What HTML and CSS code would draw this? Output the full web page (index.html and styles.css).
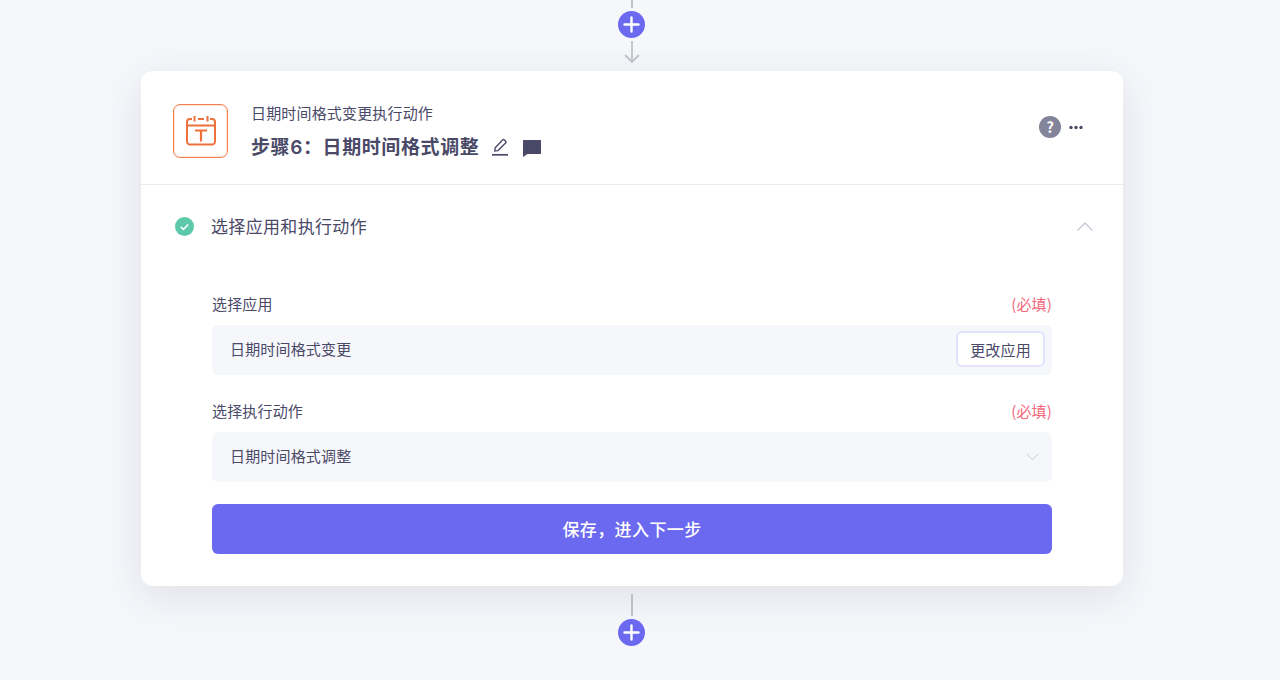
FILE: index.html
```html
<!DOCTYPE html>
<html lang="zh-CN">
<head>
    <meta charset="UTF-8">
    <meta name="viewport" content="width=device-width, initial-scale=1.0">
    <title>日期时间格式调整</title>
    <link rel="stylesheet" href="styles.css">
</head>
<body>
    <div class="connector connector-top">
        <div class="line line-top"></div>
        <button class="add-btn" aria-label="添加步骤">
            <svg width="27" height="27" viewBox="0 0 27 27"><path d="M13.500 6.500v14M6.500 13.500h14" stroke="#fff" stroke-width="2.400" stroke-linecap="round" fill="none"/></svg>
        </button>
        <svg class="arrow" width="16" height="23" viewBox="0 0 16 23"><path d="M8 0v21M1 14l7 7 7-7" stroke="#c0c1c6" stroke-width="1.800" fill="none"/></svg>
    </div>

    <div class="card">
        <div class="card-head">
            <div class="app-icon">
                <svg width="32" height="32" viewBox="0 0 32 32" fill="none" stroke="#f0703c" stroke-width="2">
                    <path d="M7 4H5A3 3 0 0 0 2 7v19.500a3 3 0 0 0 3 3h22a3 3 0 0 0 3-3V7a3 3 0 0 0-3-3h-2"/>
                    <path d="M13 4h6M9.500 1v5.500M22.500 1v5.500M2 10.500h28"/>
                    <path d="M10 15.500h12M16 15.500v11" stroke-width="2.200"/>
                </svg>
            </div>
            <div class="head-text">
                <div class="head-sub">日期时间格式变更执行动作</div>
                <div class="head-title">
                    <span>步骤6&#xFF1A;日期时间格式调整</span>
                    <svg class="edit-icon" width="17" height="18" viewBox="0 0 17 18" fill="none" stroke="#4a4a68" stroke-width="1.400"><path d="M2.800 13 3.200 9.800 10.800 1.800a1 1 0 0 1 1.400 0l1.600 1.600a1 1 0 0 1 0 1.400L6 12.600z"/><path d="M0 16.800h16" stroke-width="1.700"/></svg>
                    <svg class="note-icon" width="18" height="17" viewBox="0 0 18 17"><path d="M.6 0h16.800a.6.6 0 0 1 .6.600v12.800a.6.6 0 0 1-.6.600H4.500L0 17V.6A.6.6 0 0 1 .6 0z" fill="#4a4a68"/></svg>
                </div>
            </div>
            <div class="head-actions">
                <span class="help-icon">?</span>
                <svg width="14" height="5" viewBox="0 0 14 5" fill="#4a4a68"><circle cx="2" cy="2.500" r="1.700"/><circle cx="7" cy="2.500" r="1.700"/><circle cx="12" cy="2.500" r="1.700"/></svg>
            </div>
        </div>

        <div class="section-head">
            <svg width="19" height="19" viewBox="0 0 19 19"><circle cx="9.500" cy="9.500" r="9.500" fill="#5cc9aa"/><path d="m5.800 9.800 2.600 2.500 4.800-4.800" stroke="#fff" stroke-width="1.600" fill="none"/></svg>
            <span class="section-title">选择应用和执行动作</span>
            <svg class="chevron-up" width="16" height="9" viewBox="0 0 16 9"><path d="M.4 8.600 8 1l7.600 7.600" stroke="#b9c0cd" stroke-width="1.100" fill="none"/></svg>
        </div>

        <div class="form">
            <div class="field">
                <div class="field-label"><span>选择应用</span><span class="required">(必填)</span></div>
                <div class="field-box">
                    <span class="field-value">日期时间格式变更</span>
                    <button class="change-btn">更改应用</button>
                </div>
            </div>
            <div class="field">
                <div class="field-label"><span>选择执行动作</span><span class="required">(必填)</span></div>
                <div class="field-box">
                    <span class="field-value">日期时间格式调整</span>
                    <svg class="chevron-down" width="13" height="8" viewBox="0 0 13 8"><path d="m.5.700 6 6 6-6" stroke="#c3c6d1" stroke-width="1" fill="none"/></svg>
                </div>
            </div>
            <button class="save-btn">保存&#xFF0C;进入下一步</button>
        </div>
    </div>

    <div class="connector connector-bottom">
        <div class="line line-bottom"></div>
        <button class="add-btn" aria-label="添加步骤">
            <svg width="27" height="27" viewBox="0 0 27 27"><path d="M13.500 6.500v14M6.500 13.500h14" stroke="#fff" stroke-width="2.400" stroke-linecap="round" fill="none"/></svg>
        </button>
    </div>
</body>
</html>
```

FILE: styles.css
```css
html, body { height: 100%; }
body { margin: 0; height: 680px; overflow: hidden; background: #f6f7fb; color: #4a4a68; font-family: "Noto Sans CJK SC", "Noto Sans", sans-serif; }
button { font-family: inherit; cursor: pointer; }

.connector { width: 982px; margin-left: 141px; display: flex; flex-direction: column; align-items: center; }
.connector-top { height: 71px; }
.connector-bottom { margin-top: 8px; }
.line { width: 2px; background: #c0c1c6; }
.line-top { height: 8px; margin-bottom: 3px; }
.line-bottom { height: 22px; margin-bottom: 3px; }
.add-btn { width: 27px; height: 27px; padding: 0; margin-right: 1px; border: 0; border-radius: 50%; background: #6b69f0; display: block; }
.add-btn svg { display: block; }
.arrow { margin-top: 3px; }

.card { width: 982px; height: 515px; margin-left: 141px; background: #fff; border-radius: 12px; box-shadow: 0 10px 40px rgba(60, 64, 90, 0.12); }
.card-head { height: 113px; padding: 0 40px 0 32px; display: flex; align-items: center; border-bottom: 1px solid #e9eaee; }
.app-icon { width: 53px; height: 52px; margin-top: 6px; margin-right: 23px; border: 1px solid #f4814f; border-radius: 7px; box-shadow: inset 0 0 0 1px rgba(245, 121, 63, 0.2); display: flex; align-items: center; justify-content: center; }
.head-text { flex: 1; margin-top: 8px; }
.head-sub { font-size: 15px; line-height: 22px; letter-spacing: 0.17px; }
.head-title { margin-top: 11px; font-family: Inter, "Noto Sans CJK SC", sans-serif; font-size: 19px; line-height: 26px; font-weight: 600; letter-spacing: 0.6px; display: flex; align-items: center; }
.edit-icon { margin-left: 13px; margin-top: -2px; }
.note-icon { margin-left: 14px; }
.head-actions { display: flex; align-items: center; gap: 8px; margin-top: -1px; }
.help-icon { width: 22px; height: 22px; border-radius: 50%; background: #83839a; color: #fff; font-size: 15px; line-height: 22px; font-weight: 700; text-align: center; }

.section-head { height: 82px; padding: 0 30px 2px 34px; display: flex; align-items: center; }
.section-title { flex: 1; margin-left: 17px; margin-bottom: 2px; font-size: 17px; letter-spacing: 0.33px; }
.chevron-up { display: block; }

.form { margin: 0 71px; }
.field { margin-top: 27px; }
.field:first-child { margin-top: 26px; }
.field-label { display: flex; justify-content: space-between; font-size: 15px; line-height: 18px; letter-spacing: 0.17px; margin-bottom: 12px; }
.required { color: #f2687c; }
.field-box { height: 48px; padding: 0 7px 2px 18px; background: #f6f7fb; border-radius: 6px; display: flex; align-items: center; justify-content: space-between; font-size: 15px; letter-spacing: 0.17px; }
.field-value { margin-bottom: 2px; }
.change-btn { width: 89px; height: 36px; padding: 0; background: #fff; border: 2px solid #e3e2fd; border-radius: 6px; color: #4a4a68; font-size: 15px; letter-spacing: 0.17px; }
.chevron-down { margin-right: 6px; margin-top: 2px; }
.save-btn { display: block; width: 100%; height: 50px; margin-top: 22px; padding: 0 0 2px; border: 0; border-radius: 6px; background: #6b69f0; color: #fff; font-size: 17px; font-weight: 500; letter-spacing: 0.4px; }
```
